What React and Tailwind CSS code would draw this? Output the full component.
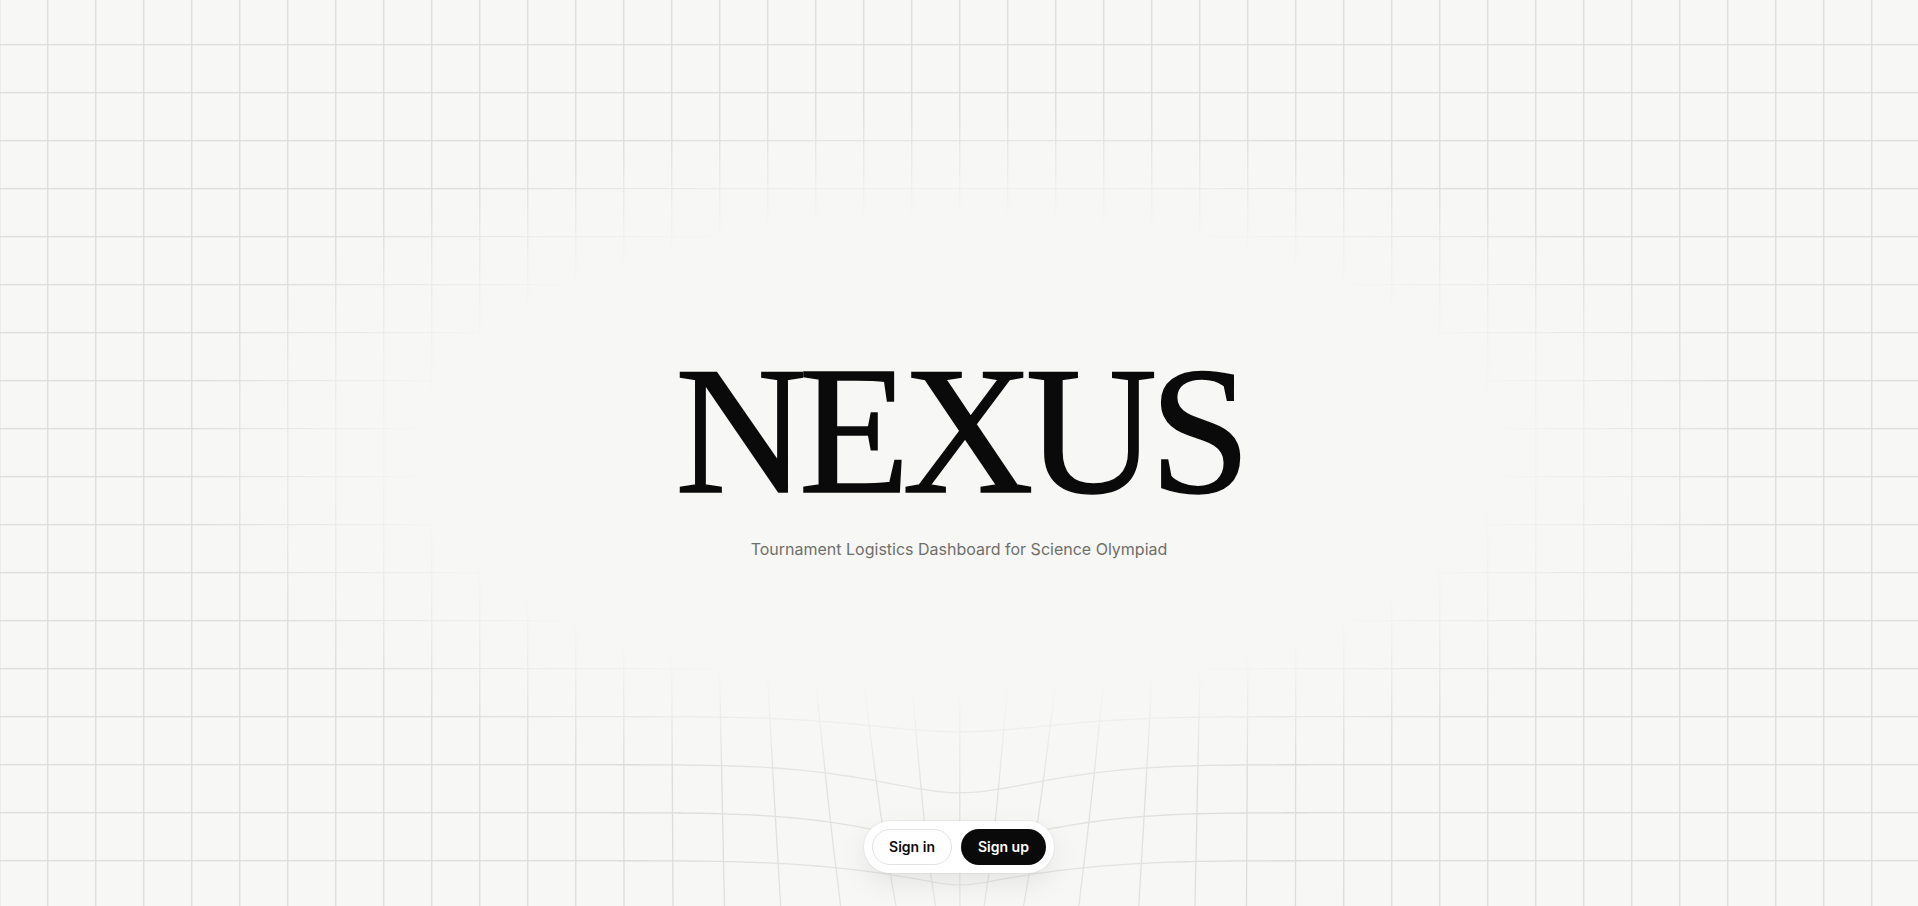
import React, { useMemo } from 'react';

const W = 1918;
const H = 906;
const CELL = 48;

// pinch/sag around the sign-in pill near the bottom
const warp = (x, y) => {
  const u = x - 960;
  const g = Math.exp(-((u / 130) ** 2));
  const a = Math.max(0, (0.6 * (y - 680)) / 226);
  const dx = -u * a * g;
  const dy = 33 * Math.exp(-(((y - 805) / 100) ** 2)) * g;
  return [x + dx, y + dy];
};

const buildGrid = () => {
  const parts = [];
  for (let k = 0; k * CELL <= W + CELL; k++) {
    const x = k * CELL - 0.25;
    let d = '';
    for (let y = -4; y <= H + 8; y += 6) {
      const [px, py] = warp(x, y);
      d += `${d ? 'L' : 'M'}${px.toFixed(2)} ${py.toFixed(2)}`;
    }
    parts.push(d);
  }
  for (let k = 0; 44.7 + k * CELL <= H + CELL; k++) {
    const y = 44.7 + k * CELL;
    let d = '';
    for (let x = -4; x <= W + 8; x += 6) {
      const [px, py] = warp(x, y);
      d += `${d ? 'L' : 'M'}${px.toFixed(2)} ${py.toFixed(2)}`;
    }
    parts.push(d);
  }
  return parts;
};

const Grid = () => {
  const paths = useMemo(buildGrid, []);
  return (
    <svg className="absolute inset-0 h-full w-full" viewBox={`0 0 ${W} ${H}`} preserveAspectRatio="none">
      {paths.map((d, i) => (
        <path key={i} d={d} fill="none" stroke="#dcdcd9" strokeWidth="1.3" />
      ))}
    </svg>
  );
};

const App = () => {
  return (
    <div className="relative h-screen w-full overflow-hidden bg-[#f7f7f5]">
      <Grid />
      <div className="absolute inset-0 bg-[radial-gradient(ellipse_780px_345px_at_50%_50%,#f7f7f5_68%,rgba(247,247,245,0.55)_84%,rgba(247,247,245,0)_100%)]" />
      <div className="absolute inset-0 bg-[radial-gradient(ellipse_320px_260px_at_50%_100%,rgba(247,247,245,0.4),rgba(247,247,245,0)_100%)]" />

      <div className="relative flex h-full flex-col items-center">
        <div className="flex flex-1 flex-col items-center justify-center pt-[80px]">
          <h1 className="text-[182px] leading-none tracking-[-0.043em] text-[#0a0a0a] [-webkit-text-stroke:1.5px_#0a0a0a] font-['Liberation_Serif',serif]">
            NEXUS
          </h1>
          <p className="mt-[15px] text-base leading-6 text-[#6f6f6a] font-['Inter',sans-serif]">
            Tournament Logistics Dashboard for Science Olympiad
          </p>
        </div>

        <div className="mb-[33px] flex items-center gap-[9px] rounded-full bg-white p-2 shadow-[0_0_0_1px_rgba(0,0,0,0.04),0_10px_28px_rgba(0,0,0,0.08)] font-['Inter',sans-serif]">
          <button className="h-9 rounded-full border border-[#e2e2df] bg-white px-4 text-sm font-semibold text-[#0a0a0a]">
            Sign in
          </button>
          <button className="h-9 rounded-full bg-[#0a0a0a] px-[17px] text-sm font-semibold text-white">
            Sign up
          </button>
        </div>
      </div>
    </div>
  );
};

export default App;
